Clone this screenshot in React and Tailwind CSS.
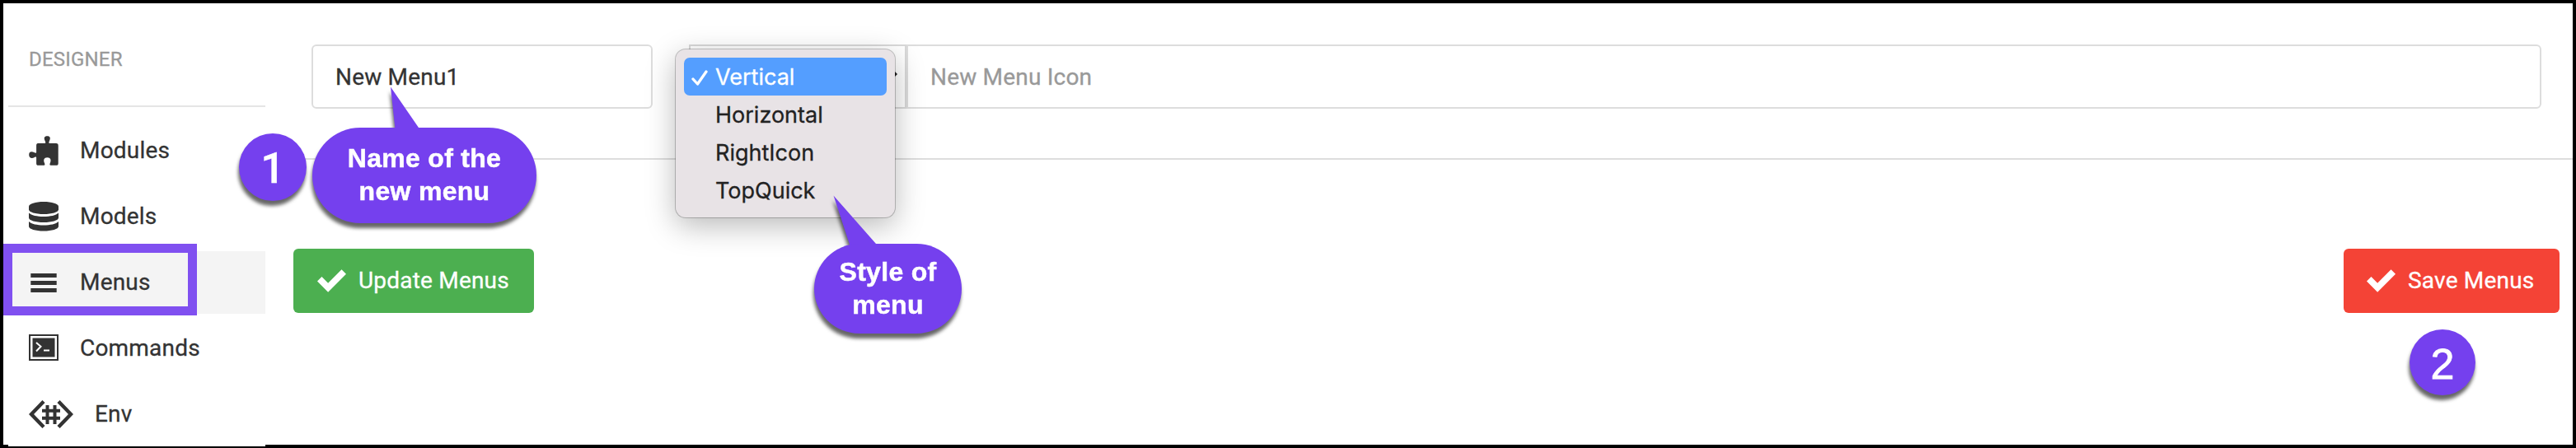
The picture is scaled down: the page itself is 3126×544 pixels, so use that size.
const Puzzle = () => (
  <svg width="36" height="36" viewBox="0 0 36 36" fill="#333">
    <path d="M11 9h8.500c1.200 0 .8-1.600 .2-2.800C18 2.800 18.500 .3 22.300 .3s4.300 2.500 2.600 5.900c-.6 1.200-1 2.800 .2 2.800h7.900c2 0 2.700 .8 2.700 2.700v21.500c0 1.800-.8 2.600-2.600 2.600h-6.500c-1.500 0-1.400-1.200-.8-2.700 1.500-3.500 .8-6.800-3.400-6.800s-4.900 3.300-3.400 6.800c.6 1.500 .7 2.700-.7 2.700h-6.700c-1.800 0-2.500-.8-2.500-2.600v-6.600c0-1.300-1-1.300-2.200-.6C3.600 27.800 .2 27 .2 22.900s3.300-4.400 6.600-2.600c1.300 .7 2.300 .8 2.300-.5v-8.100C9.100 9.800 9.800 9 11 9z" />
  </svg>
);

const Database = () => (
  <svg width="36" height="36" viewBox="0 0 36 36" fill="#333">
    <path d="M0 5.500C0 2.500 8 0 18 0s18 2.500 18 5.500v4C36 12.500 28 15 18 15S0 12.500 0 9.500z" />
    <path d="M0 13.500c3 3 10 4.500 18 4.500s15-1.500 18-4.500v6c0 3-8 5.500-18 5.500S0 22.500 0 19.500z" />
    <path d="M0 24c3 3 10 4.500 18 4.500s15-1.500 18-4.500v6c0 3-8 5.500-18 5.500S0 33 0 30z" />
  </svg>
);

const Bars = () => (
  <svg width="36" height="36" viewBox="0 0 36 36" fill="#333">
    <path d="M2.300 7h31.400v5H2.300zM2.300 16h31.400v5H2.300zM2.300 25h31.400v5H2.300z" />
  </svg>
);

const Terminal = () => (
  <svg className="mb-[2px]" width="36" height="32" viewBox="0 0 36 32">
    <rect x="1" y="1" width="34" height="30" fill="#fff" stroke="#333" strokeWidth="2" />
    <rect x="4.500" y="4.500" width="27" height="23" fill="#333" />
    <path d="M9 10l5.500 4.800L9 20.500M18 19.500h7" fill="none" stroke="#fff" strokeWidth="2" />
  </svg>
);

const Env = () => (
  <svg width="54" height="34" viewBox="0 0 54 34" fill="none" stroke="#333" strokeWidth="4.400">
    <path d="M18 1.500L3 17l15 15.500M36 1.500L51 17 36 32.500" />
    <path d="M16 12.800h22M16 21.800h22M22.500 6v23M31.500 6v23" strokeWidth="4" />
  </svg>
);

const Check = () => (
  <svg width="35" height="28" viewBox="0 60 512 408" fill="#fff">
    <path d="M432 64L192 304 80 192 0 272l192 192 320-320z" />
  </svg>
);

const items = [
  { label: "Modules", icon: <Puzzle />, cls: "" },
  { label: "Models", icon: <Database />, cls: "" },
  { label: "Menus", icon: <Bars />, cls: "bg-[#f4f4f4]" },
  { label: "Commands", icon: <Terminal />, cls: "" },
  { label: "Env", icon: <Env />, cls: "" },
];

const options = ["Vertical", "Horizontal", "RightIcon", "TopQuick"];

const Callout = ({ box, tail, size, children }) => (
  <div className={`absolute ${box} [filter:drop-shadow(-1px_6px_2px_rgba(0,0,0,0.6))]`}>
    <svg className="absolute left-0 -top-[60px] overflow-visible" width={size} height="70" fill="#7540ee">
      <path d={tail} />
    </svg>
    <div className="relative flex h-full w-full flex-col items-center justify-center rounded-[58px] bg-[#7540ee] pb-[2px] text-center font-['Liberation_Sans',sans-serif] text-[32px] leading-[40px] font-bold tracking-[0.3px] text-white [-webkit-text-stroke:0.5px_white]">
      {children}
    </div>
  </div>
);

const Step = ({ box, children }) => (
  <div className={`absolute flex items-center justify-center rounded-full bg-[#7540ee] pt-1 text-[52px] leading-none tracking-normal text-white shadow-[-1px_6px_4px_rgba(0,0,0,0.6)] ${box}`}>
    {children}
  </div>
);

export default function App() {
  return (
    <div className="relative flex h-[544px] w-[3126px] overflow-hidden bg-black p-1 font-[Roboto,sans-serif] text-[28px] tracking-[0.2px] text-[#333] [-webkit-text-stroke:0.3px]">
      <div className="h-[536px] w-[6px] bg-white" />
      <aside className="flex h-[538px] w-[312px] shrink-0 flex-col bg-white">
        <div className="flex h-[126px] shrink-0 items-center border-b-2 border-[#e5e5e5] pl-[25px] text-2xl text-[#999]">
          <span className="pt-[12px]">DESIGNER</span>
        </div>
        <nav className="mt-[15px] flex flex-col gap-1">
          {items.map((it) => (
            <div key={it.label} className={`flex h-[76px] items-center gap-[26px] pl-[25px] ${it.cls}`}>
              {it.icon}
              <span>{it.label}</span>
            </div>
          ))}
        </nav>
      </aside>
      <main className="flex h-[536px] flex-1 flex-col bg-white">
        <div className="ml-[34px] flex h-[190px] items-start border-b-2 border-[#ddd] pt-[50px] pr-[38px] pl-[22px]">
          <div className="flex h-[78px] w-[414px] items-center rounded-md border-2 border-[#ddd] pt-[2px] pl-[27px]">New Menu1</div>
          <div className="ml-11 flex h-[78px] w-[264px] items-center justify-end border-2 border-[#d9d9d9] pr-[9px] pb-[7px]">
            <svg width="12" height="8" viewBox="0 0 12 8" fill="#222">
              <path d="M4 4L8 0l4 4-4 4z" />
            </svg>
          </div>
          <div className="flex h-[78px] flex-1 items-center rounded-r-md border-2 border-[#ddd] pt-[2px] pl-[27px] text-[#999]">New Menu Icon</div>
        </div>
        <div className="mt-[108px] flex justify-between pr-[16px] pl-[34px]">
          <div className="flex h-[78px] w-[292px] items-center gap-[15px] rounded-md bg-[#4caf50] pl-[29px] text-white">
            <Check />
            <span>Update Menus</span>
          </div>
          <div className="flex h-[78px] w-[262px] items-center gap-[15px] rounded-md bg-[#f44336] pl-[28px] text-white">
            <Check />
            <span>Save Menus</span>
          </div>
        </div>
      </main>

      <div className="absolute top-[60px] left-[820px] flex h-[204px] w-[266px] flex-col rounded-xl bg-[#e8e3e6] px-[10px] pt-[10px] font-[Inter,sans-serif] text-[27px] tracking-normal text-[#222] shadow-[0_0_0_1px_rgba(0,0,0,0.22),0_10px_36px_rgba(0,0,0,0.28)]">
        {options.map((o, i) => (
          <div key={o} className={i === 0 ? "flex h-[46px] items-center rounded-[7px] bg-[#549eff] pl-[9px] text-white" : "flex h-[46px] items-center pl-[9px]"}>
            <span className="w-[29px] shrink-0">
              {i === 0 && (
                <svg className="mt-[3px]" width="20" height="19" viewBox="0 0 20 19" fill="none" stroke="#fff" strokeWidth="3.300" strokeLinecap="round" strokeLinejoin="round">
                  <path d="M2 11l5.500 6L18 2" />
                </svg>
              )}
            </span>
            <span className="pt-[3px]">{o}</span>
          </div>
        ))}
      </div>

      <div className="absolute top-[296px] left-1 h-[87px] w-[235px] border-[11px] border-[#8050f0]" />
      <Callout box="top-[155px] left-[379px] h-[116px] w-[272px]" size="272" tail="M95 10.500L101 66H135L129 60z">
        <span>Name of the</span>
        <span>new menu</span>
      </Callout>
      <Callout box="top-[296px] left-[988px] h-[109px] w-[179px]" size="179" tail="M23.500 1.500L46 70H84L75 60z">
        <span>Style of</span>
        <span>menu</span>
      </Callout>
      <Step box="top-[162px] left-[290px] size-[82px] font-[Roboto,sans-serif] font-medium">1</Step>
      <Step box="top-[400px] left-[2924px] size-[80px] font-['Liberation_Sans',sans-serif] [-webkit-text-stroke:0.8px]">2</Step>
    </div>
  );
}
